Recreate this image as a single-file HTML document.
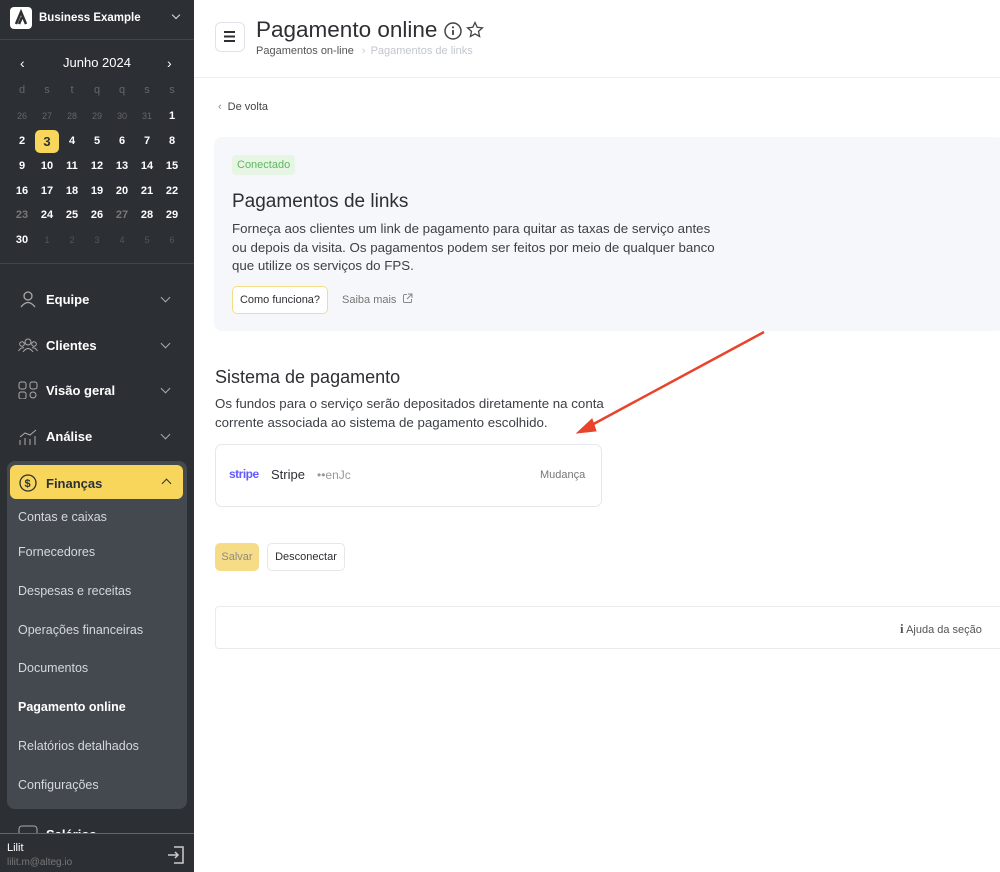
<!DOCTYPE html>
<html><head><meta charset="utf-8"><style>
*{box-sizing:border-box;margin:0;padding:0}
body{width:1000px;height:872px;overflow:hidden;font-family:"Liberation Sans",sans-serif;background:#fff;position:relative;color:#2d2f33}
.sb{position:absolute;left:0;top:0;width:194px;height:872px;background:#2c3034;color:#fff}
.a{position:absolute}
.cal div{position:absolute;width:24px;text-align:center;font-size:11px;font-weight:bold}
.mi{position:absolute;left:18px;font-size:13px;font-weight:bold;color:#fff;display:flex;align-items:center}
.mi svg{margin-right:8px}
.chev{position:absolute;left:162px;width:7px;height:7px;border-right:1.5px solid #aaa;border-bottom:1.5px solid #aaa;transform:rotate(45deg)}
.sub{position:absolute;left:18px;font-size:12.5px;color:#d6d8dc}
</style></head><body>
<div class="sb">
 <div class="a" style="left:10px;top:7px;width:22px;height:22px;background:#fff;border-radius:4px"><svg width="22" height="22"><path d="M6 17 L11 5 L16 17 M9 17 L12 10" stroke="#2c3034" stroke-width="2.5" fill="none"/></svg></div>
 <div class="a" style="left:39px;top:12px;font-size:11.5px;font-weight:bold">Business Example</div>
 <div class="chev" style="left:173px;top:12px;width:6px;height:6px;border-color:#ddd"></div>
 <div class="a" style="left:0;top:39px;width:194px;height:1px;background:#41464b"></div>
 <div class="a" style="left:20px;top:55px;font-size:14px">‹</div>
 <div class="a" style="left:63px;top:55px;font-size:13px">Junho 2024</div>
 <div class="a" style="left:167px;top:55px;font-size:14px">›</div>
 <div class="cal">
  <div style="left:10px;top:84px;color:#666;font-weight:normal">d</div><div style="left:35px;top:84px;color:#666;font-weight:normal">s</div><div style="left:60px;top:84px;color:#666;font-weight:normal">t</div><div style="left:85px;top:84px;color:#666;font-weight:normal">q</div><div style="left:110px;top:84px;color:#666;font-weight:normal">q</div><div style="left:135px;top:84px;color:#666;font-weight:normal">s</div><div style="left:160px;top:84px;color:#666;font-weight:normal">s</div>
  <div style="left:10px;top:111px;color:#666;font-weight:normal;font-size:9px">26</div><div style="left:35px;top:111px;color:#666;font-weight:normal;font-size:9px">27</div><div style="left:60px;top:111px;color:#666;font-weight:normal;font-size:9px">28</div><div style="left:85px;top:111px;color:#666;font-weight:normal;font-size:9px">29</div><div style="left:110px;top:111px;color:#666;font-weight:normal;font-size:9px">30</div><div style="left:135px;top:111px;color:#666;font-weight:normal;font-size:9px">31</div><div style="left:160px;top:110px">1</div>
  <div style="left:10px;top:135px">2</div><div style="left:35px;top:130px;height:23px;line-height:23px;background:#f8d65c;color:#2c3034;border-radius:5px;font-size:13px">3</div><div style="left:60px;top:135px">4</div><div style="left:85px;top:135px">5</div><div style="left:110px;top:135px">6</div><div style="left:135px;top:135px">7</div><div style="left:160px;top:135px">8</div>
  <div style="left:10px;top:160px">9</div><div style="left:35px;top:160px">10</div><div style="left:60px;top:160px">11</div><div style="left:85px;top:160px">12</div><div style="left:110px;top:160px">13</div><div style="left:135px;top:160px">14</div><div style="left:160px;top:160px">15</div>
  <div style="left:10px;top:185px">16</div><div style="left:35px;top:185px">17</div><div style="left:60px;top:185px">18</div><div style="left:85px;top:185px">19</div><div style="left:110px;top:185px">20</div><div style="left:135px;top:185px">21</div><div style="left:160px;top:185px">22</div>
  <div style="left:10px;top:209px;color:#777">23</div><div style="left:35px;top:209px">24</div><div style="left:60px;top:209px">25</div><div style="left:85px;top:209px">26</div><div style="left:110px;top:209px;color:#777">27</div><div style="left:135px;top:209px">28</div><div style="left:160px;top:209px">29</div>
  <div style="left:10px;top:234px">30</div><div style="left:35px;top:235px;color:#555;font-weight:normal;font-size:9px">1</div><div style="left:60px;top:235px;color:#555;font-weight:normal;font-size:9px">2</div><div style="left:85px;top:235px;color:#555;font-weight:normal;font-size:9px">3</div><div style="left:110px;top:235px;color:#555;font-weight:normal;font-size:9px">4</div><div style="left:135px;top:235px;color:#555;font-weight:normal;font-size:9px">5</div><div style="left:160px;top:235px;color:#555;font-weight:normal;font-size:9px">6</div>
 </div>
 <div class="a" style="left:0;top:263px;width:194px;height:1px;background:#41464b"></div>
 <div class="mi" style="top:290px"><svg width="20" height="18"><circle cx="10" cy="6" r="4" stroke="#aaa" fill="none" stroke-width="1.3"/><path d="M3 17 Q10 8 17 17" stroke="#aaa" fill="none" stroke-width="1.3"/></svg>Equipe</div><div class="chev" style="top:294px"></div>
 <div class="mi" style="top:336px"><svg width="20" height="18"><circle cx="10" cy="6" r="3" stroke="#aaa" fill="none"/><circle cx="4" cy="8" r="2.3" stroke="#aaa" fill="none"/><circle cx="16" cy="8" r="2.3" stroke="#aaa" fill="none"/><path d="M5 16 Q10 9 15 16 M0.5 15 Q3 11 6 12 M19.5 15 Q17 11 14 12" stroke="#aaa" fill="none"/></svg>Clientes</div><div class="chev" style="top:340px"></div>
 <div class="mi" style="top:381px"><svg width="20" height="18"><rect x="1" y="1" width="7" height="7" rx="2" stroke="#aaa" fill="none"/><rect x="12" y="1" width="7" height="7" rx="2" stroke="#aaa" fill="none"/><rect x="1" y="11" width="7" height="7" rx="2" stroke="#aaa" fill="none"/><circle cx="15" cy="14" r="3" stroke="#aaa" fill="none"/></svg>Visão geral</div><div class="chev" style="top:385px"></div>
 <div class="mi" style="top:427px"><svg width="20" height="18"><path d="M2 10 L7 6 L12 8 L18 3" stroke="#aaa" fill="none"/><path d="M2 13v5M7 11v7M12 12v6M17 9v9" stroke="#aaa"/></svg>Análise</div><div class="chev" style="top:431px"></div>
 <div class="a" style="left:7px;top:461px;width:180px;height:348px;background:#44484f;border-radius:8px"></div>
 <div class="a" style="left:10px;top:465px;width:173px;height:34px;background:#f8d65c;border-radius:6px"></div>
 <div class="mi" style="top:473px;color:#2c3034"><svg width="20" height="20"><circle cx="10" cy="10" r="8" stroke="#2c3034" fill="none" stroke-width="1.3"/><text x="6.5" y="14" font-size="11" font-family="Liberation Sans" fill="#2c3034">$</text></svg>Finanças</div>
 <div class="chev" style="left:163px;top:480px;transform:rotate(-135deg);border-color:#2c3034"></div>
 <div class="sub" style="top:510px">Contas e caixas</div>
 <div class="sub" style="top:545px">Fornecedores</div>
 <div class="sub" style="top:584px">Despesas e receitas</div>
 <div class="sub" style="top:623px">Operações financeiras</div>
 <div class="sub" style="top:661px">Documentos</div>
 <div class="sub" style="top:700px;color:#fff;font-weight:bold">Pagamento online</div>
 <div class="sub" style="top:739px">Relatórios detalhados</div>
 <div class="sub" style="top:778px">Configurações</div>
 <div class="mi" style="top:825px"><svg width="20" height="18"><rect x="1" y="1" width="18" height="14" rx="3" stroke="#aaa" fill="none"/></svg>Salários</div>
 <div class="a" style="left:0;top:833px;width:194px;height:39px;background:#2c3034;border-top:1px solid #666"></div>
 <div class="a" style="left:7px;top:842px;font-size:11px">Lilit</div>
 <div class="a" style="left:7px;top:857px;font-size:10px;color:#777">lilit.m@alteg.io</div>
 <svg class="a" style="left:166px;top:845px" width="20" height="20"><path d="M8 2h9v16H8 M2 10h10 M9 7l3 3-3 3" stroke="#ccc" stroke-width="1.5" fill="none"/></svg>
</div>

<div class="a" style="left:215px;top:22px;width:30px;height:30px;border:1.5px solid #dfe2e8;border-radius:6px"><svg width="27" height="27"><path d="M8 9h11M8 13.5h11M8 18h11" stroke="#2d2f33" stroke-width="2"/></svg></div>
<div class="a" style="left:256px;top:17px;font-size:22.5px;color:#2d2f33">Pagamento online</div>
<svg class="a" style="left:443px;top:21px" width="20" height="20"><circle cx="10" cy="10" r="8" stroke="#444" stroke-width="1.5" fill="none"/><path d="M10 9v5" stroke="#444" stroke-width="1.8"/><circle cx="10" cy="6.3" r="1.1" fill="#444"/></svg>
<svg class="a" style="left:466px;top:21px" width="18" height="18"><path d="M9 1.5l2.2 4.8 5.2.6-3.9 3.5 1.1 5.1L9 12.9 4.4 15.5l1.1-5.1L1.6 6.9l5.2-.6z" stroke="#444" stroke-width="1.3" fill="none"/></svg>
<div class="a" style="left:256px;top:45px;font-size:11px;color:#555">Pagamentos on-line <span style="color:#ccc;margin:0 5px">›</span><span style="color:#c2c6cd">Pagamentos de links</span></div>
<div class="a" style="left:194px;top:77px;width:806px;height:1px;background:#eceef1"></div>
<div class="a" style="left:218px;top:101px;font-size:11px;color:#444"><span style="color:#888;margin-right:6px">‹</span>De volta</div>

<div class="a" style="left:214px;top:137px;width:790px;height:194px;background:#f6f7fa;border-radius:8px"></div>
<div class="a" style="left:232px;top:155px;padding:4px 5px;background:#e7f5e4;color:#5cb85c;font-size:11px;border-radius:4px">Conectado</div>
<div class="a" style="left:232px;top:191px;font-size:19px;color:#2d2f33">Pagamentos de links</div>
<div class="a" style="left:232px;top:220px;width:490px;font-size:13.3px;line-height:18.5px;color:#3d4046">Forneça aos clientes um link de pagamento para quitar as taxas de serviço antes ou depois da visita. Os pagamentos podem ser feitos por meio de qualquer banco que utilize os serviços do FPS.</div>
<div class="a" style="left:232px;top:286px;width:96px;height:28px;border:1px solid #f4dd86;background:#fff;border-radius:5px;font-size:11px;line-height:26px;text-align:center">Como funciona?</div>
<div class="a" style="left:342px;top:293px;font-size:11px;color:#777">Saiba mais <svg width="11" height="11" style="vertical-align:-1px;margin-left:3px"><path d="M5 1.5H2.5a1 1 0 0 0-1 1v6a1 1 0 0 0 1 1h6a1 1 0 0 0 1-1V6M6 1h4v4M10 1L5 6" stroke="#888" fill="none"/></svg></div>

<div class="a" style="left:215px;top:367px;font-size:18px;color:#2d2f33">Sistema de pagamento</div>
<div class="a" style="left:215px;top:395px;width:400px;font-size:13.3px;line-height:18.5px;color:#3d4046">Os fundos para o serviço serão depositados diretamente na conta corrente associada ao sistema de pagamento escolhido.</div>
<div class="a" style="left:215px;top:444px;width:387px;height:63px;border:1px solid #e5e7eb;border-radius:7px"></div>
<div class="a" style="left:229px;top:467px;font-size:12px;font-weight:bold;color:#635bff;letter-spacing:-0.5px">stripe</div>
<div class="a" style="left:271px;top:467px;font-size:13px;color:#2d2f33">Stripe</div>
<div class="a" style="left:317px;top:468px;font-size:12px;color:#999">••enJc</div>
<div class="a" style="left:540px;top:469px;font-size:11px;color:#777">Mudança</div>

<div class="a" style="left:215px;top:543px;width:44px;height:28px;background:#f7dc87;border-radius:5px;font-size:11px;color:#8d8a80;line-height:28px;text-align:center">Salvar</div>
<div class="a" style="left:267px;top:543px;width:78px;height:28px;border:1px solid #e5e7eb;border-radius:5px;font-size:11px;line-height:26px;text-align:center">Desconectar</div>

<div class="a" style="left:215px;top:606px;width:790px;height:43px;border:1px solid #e8eaee;border-radius:4px"></div>
<div class="a" style="left:900px;top:621px;font-size:11px;color:#555"><b style="font-family:'Liberation Serif',serif;font-size:13px">i</b> Ajuda da seção</div>

<svg class="a" style="left:0;top:0" width="1000" height="872"><path d="M764 332 L588 427" stroke="#e8442b" stroke-width="2.5"/><path d="M577 433 L592 419 L596 431 Z" fill="#e8442b" stroke="#e8442b" stroke-width="1"/></svg>
</body></html>
